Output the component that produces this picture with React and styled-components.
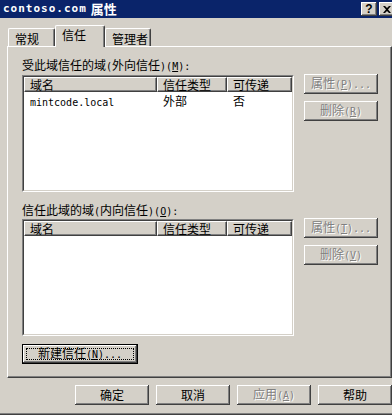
import React from "react";
import styled, { createGlobalStyle } from "styled-components";

const GlobalStyle = createGlobalStyle`
  html, body {
    margin: 0;
    padding: 0;
    background: #d4d0c8;
  }
  body {
    font-family: "Noto Sans CJK SC", "Liberation Sans", sans-serif;
    font-size: 12px;
    color: #000;
  }
`;

const Window = styled.div`
  width: 392px;
  height: 415px;
  overflow: hidden;
  background: #d4d0c8;
  display: flex;
  flex-direction: column;
  box-shadow: inset 0 -1px #404040, inset 0 -2px #808080;
`;

const TitleBar = styled.div`
  height: 18px;
  flex-shrink: 0;
  background: #0a246a;
  display: flex;
  align-items: center;
  justify-content: space-between;
  padding-left: 3px;
  color: #fff;
  font-weight: bold;
  line-height: 18px;
`;

const TitleText = styled.div`
  display: flex;
  align-items: center;
  gap: 4px;
  font-size: 13px;
  white-space: nowrap;
`;

// half-width latin, like the bitmap font's 6px cells
const Mono = styled.span`
  font-family: "DejaVu Sans Mono", "Liberation Mono", monospace;
  font-size: ${p => p.$size || 10}px;
  font-weight: ${p => (p.$bold ? "bold" : "normal")};
  letter-spacing: ${p => p.$spacing || 0}px;
`;

const TitleButtons = styled.div`
  display: flex;
  gap: 2px;
  margin-right: -3px;
`;

const CaptionButton = styled.div`
  box-sizing: border-box;
  width: 16px;
  height: 14px;
  background: #d4d0c8;
  box-shadow: inset -1px -1px #404040, inset 1px 1px #fff, inset -2px -2px #808080;
  display: flex;
  align-items: center;
  justify-content: center;
  color: #000;
  font-family: "Liberation Sans", sans-serif;
  font-size: 12px;
  font-weight: bold;
  line-height: 14px;
`;

const TabStrip = styled.div`
  display: flex;
  align-items: flex-end;
  height: 21px;
  margin-top: 7px;
  padding-left: 8px;
  flex-shrink: 0;
`;

const Tab = styled.div`
  box-sizing: border-box;
  width: ${p => p.$w}px;
  height: ${p => (p.$active ? 22 : 18)}px;
  margin-bottom: ${p => (p.$active ? -1 : 0)}px;
  padding: ${p => (p.$active ? "2px 0 0 6px" : "3px 0 0 6px")};
  line-height: 14px;
  background: #d4d0c8;
  border-top: 1px solid #fff;
  border-left: 1px solid #fff;
  border-right: 1px solid #404040;
  box-shadow: inset -1px 0 #808080;
  border-radius: 2px 2px 0 0;
  position: relative;
  z-index: ${p => (p.$active ? 1 : 0)};
  white-space: nowrap;
`;

const Panel = styled.div`
  box-sizing: border-box;
  margin-left: 7px;
  width: 385px;
  height: 332px;
  flex-shrink: 0;
  border-top: 1px solid #fff;
  border-left: 1px solid #fff;
  border-right: 1px solid #404040;
  border-bottom: 1px solid #404040;
  box-shadow: inset -1px -1px #808080;
  padding: 11px 0 0 14px;
  display: flex;
  flex-direction: column;
`;

const Label = styled.div`
  line-height: 14px;
  height: 14px;
  margin-top: ${p => p.$mt || 0}px;
  white-space: nowrap;
`;

const Section = styled.div`
  display: flex;
  margin-top: ${p => p.$mt || 0}px;
`;

const ListOuter = styled.div`
  box-sizing: border-box;
  width: 272px;
  height: 117px;
  border-top: 1px solid #808080;
  border-left: 1px solid #808080;
  border-right: 1px solid #fff;
  border-bottom: 1px solid #fff;
`;

const ListInner = styled.div`
  box-sizing: border-box;
  height: 100%;
  background: #fff;
  border-top: 1px solid #404040;
  border-left: 1px solid #404040;
  border-right: 1px solid #d4d0c8;
  border-bottom: 1px solid #d4d0c8;
  display: flex;
  flex-direction: column;
`;

const HeaderRow = styled.div`
  display: flex;
  height: 15px;
  background: #d4d0c8;
`;

const HeadCell = styled.div`
  box-sizing: border-box;
  width: ${p => p.$w}px;
  height: 15px;
  border-top: 1px solid #fff;
  border-left: 1px solid #fff;
  border-right: 1px solid #404040;
  border-bottom: 1px solid #404040;
  box-shadow: inset -1px -1px #808080;
  padding-left: 5px;
  line-height: 13px;
  white-space: nowrap;
  overflow: hidden;
`;

const Row = styled.div`
  display: flex;
  height: 16px;
  margin-top: 1px;
`;

const Cell = styled.div`
  box-sizing: border-box;
  width: ${p => p.$w}px;
  padding-left: 6px;
  line-height: 16px;
  white-space: nowrap;
`;

const ButtonCol = styled.div`
  display: flex;
  flex-direction: column;
  gap: 7px;
  margin-left: 10px;
  margin-top: -1px;
`;

const Button = styled.div`
  box-sizing: border-box;
  width: ${p => p.$w || 74}px;
  height: ${p => p.$h || 20}px;
  background: #d4d0c8;
  box-shadow: inset -1px -1px #404040, inset 1px 1px #fff, inset -2px -2px #808080;
  display: flex;
  align-items: center;
  justify-content: center;
  line-height: 14px;
  white-space: nowrap;
  color: ${p => (p.$disabled ? "#808080" : "#000")};
  text-shadow: ${p => (p.$disabled ? "1px 1px #fff" : "none")};
`;

const DefaultButton = styled.div`
  box-sizing: border-box;
  width: 116px;
  height: 20px;
  margin-top: 8px;
  border: 1px solid #000;
  background: #d4d0c8;
  box-shadow: inset -1px -1px #404040, inset 1px 1px #fff, inset -2px -2px #808080;
  padding: 3px;
  display: flex;
`;

const FocusRect = styled.div`
  flex: 1;
  border: 1px dotted #000;
  display: flex;
  align-items: center;
  justify-content: center;
  line-height: 12px;
  white-space: nowrap;
`;

const Footer = styled.div`
  display: flex;
  gap: 7px;
  margin-top: 7px;
  padding-left: 75px;
`;

const CloseIcon = () => (
  <svg width="8" height="7" viewBox="0 0 8 7">
    <path d="M0 0h2l2 2 2-2h2L5 3.5 8 7H6L4 5 2 7H0l3-3.5z" fill="#000" />
  </svg>
);

// caption text followed by "(X)" mnemonic in half-width cells
const Caption = ({ text, mid, keyChar, tail = "" }) => (
  <span>
    {text}
    {mid && (
      <>
        <Mono>(</Mono>
        {mid}
        <Mono>)</Mono>
      </>
    )}
    <Mono>
      (<u>{keyChar}</u>){tail}
    </Mono>
  </span>
);

const cols = [133, 70, 65];

const TrustList = ({ rows = [] }) => (
  <ListOuter>
    <ListInner>
      <HeaderRow>
        <HeadCell $w={cols[0]}>域名</HeadCell>
        <HeadCell $w={cols[1]}>信任类型</HeadCell>
        <HeadCell $w={cols[2]}>可传递</HeadCell>
      </HeaderRow>
      {rows.map(r => (
        <Row key={r.name}>
          <Cell $w={cols[0]}>
            <Mono>{r.name}</Mono>
          </Cell>
          <Cell $w={cols[1]}>{r.type}</Cell>
          <Cell $w={cols[2]}>{r.transitive}</Cell>
        </Row>
      ))}
    </ListInner>
  </ListOuter>
);

const App = () => {
  return (
    <>
      <GlobalStyle />
      <Window>
        <TitleBar>
          <TitleText>
            <Mono $size={11} $bold $spacing={1}>contoso.com</Mono>
            <span>属性</span>
          </TitleText>
          <TitleButtons>
            <CaptionButton>?</CaptionButton>
            <CaptionButton>
              <CloseIcon />
            </CaptionButton>
          </TitleButtons>
        </TitleBar>

        <TabStrip>
          <Tab $w={47}>常规</Tab>
          <Tab $w={50} $active>
            信任
          </Tab>
          <Tab $w={46}>管理者</Tab>
        </TabStrip>

        <Panel>
          <Label>
            <Caption text="受此域信任的域" mid="外向信任" keyChar="M" tail=":" />
          </Label>
          <Section $mt={3}>
            <TrustList rows={[{ name: "mintcode.local", type: "外部", transitive: "否" }]} />
            <ButtonCol>
              <Button $disabled>
                <Caption text="属性" keyChar="P" tail="..." />
              </Button>
              <Button $disabled>
                <Caption text="删除" keyChar="R" />
              </Button>
            </ButtonCol>
          </Section>

          <Label $mt={11}>
            <Caption text="信任此域的域" mid="内向信任" keyChar="O" tail=":" />
          </Label>
          <Section $mt={2}>
            <TrustList />
            <ButtonCol>
              <Button $disabled>
                <Caption text="属性" keyChar="T" tail="..." />
              </Button>
              <Button $disabled>
                <Caption text="删除" keyChar="V" />
              </Button>
            </ButtonCol>
          </Section>

          <DefaultButton>
            <FocusRect>
              <Caption text="新建信任" keyChar="N" tail="..." />
            </FocusRect>
          </DefaultButton>
        </Panel>

        <Footer>
          <Button>确定</Button>
          <Button>取消</Button>
          <Button $disabled>
            <Caption text="应用" keyChar="A" />
          </Button>
          <Button>帮助</Button>
        </Footer>
      </Window>
    </>
  );
};

export default App;
